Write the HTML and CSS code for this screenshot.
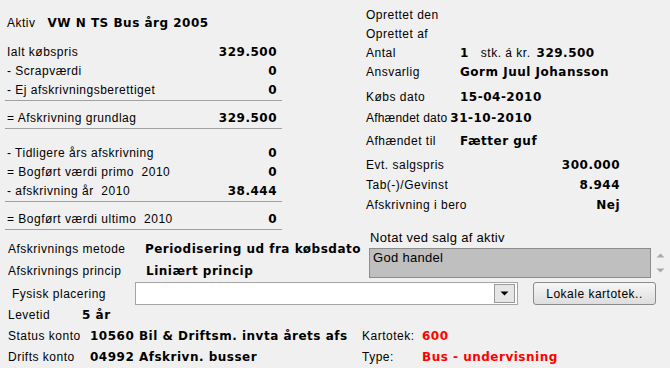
FILE: index.html
```html
<!DOCTYPE html>
<html>
<head>
<meta charset="UTF-8">
<title>Aktiv</title>
<link rel="stylesheet" href="styles.css">
</head>
<body>
<div class="form">
	<div class="top">
		<div class="calc">
			<div class="aktiv"><span class="k">Aktiv</span><b>VW N TS Bus årg 2005</b></div>
			<div class="group">
				<div class="row"><span>Ialt købspris</span><b>329.500</b></div>
				<div class="row"><span>- Scrapværdi</span><b>0</b></div>
				<div class="row"><span>- Ej afskrivningsberettiget</span><b>0</b></div>
			</div>
			<div class="group g2">
				<div class="row"><span>= Afskrivning grundlag</span><b>329.500</b></div>
			</div>
			<div class="group g3">
				<div class="row"><span>- Tidligere års afskrivning</span><b>0</b></div>
				<div class="row"><span>= Bogført værdi primo&nbsp; 2010</span><b>0</b></div>
				<div class="row"><span>- afskrivning år&nbsp; 2010</span><b>38.444</b></div>
			</div>
			<div class="group g4">
				<div class="row"><span>= Bogført værdi ultimo&nbsp; 2010</span><b>0</b></div>
			</div>
		</div>

		<div class="info">
			<div class="ia">
				<div class="ln"><span class="k">Oprettet den</span></div>
				<div class="ln"><span class="k">Oprettet af</span></div>
				<div class="ln"><span class="k">Antal</span><b class="qty">1</b><span class="stk">stk. á kr.</span><b>329.500</b></div>
				<div class="ln"><span class="k">Ansvarlig</span><b>Gorm Juul Johansson</b></div>
			</div>
			<div class="ib">
				<div class="ln"><span class="k">Købs dato</span><b>15-04-2010</b></div>
				<div class="ln"><span class="k auto">Afhændet dato</span><b>31-10-2010</b></div>
			</div>
			<div class="ic">
				<div class="ln"><span class="k">Afhændet til</span><b>Fætter guf</b></div>
			</div>
			<div class="id">
				<div class="ln"><span>Evt. salgspris</span><b>300.000</b></div>
				<div class="ln"><span>Tab(-)/Gevinst</span><b>8.944</b></div>
				<div class="ln"><span>Afskrivning i bero</span><b>Nej</b></div>
			</div>
		</div>
	</div>

	<div class="mid">
		<div class="method">
			<div class="ln"><span class="k">Afskrivnings metode</span><b>Periodisering ud fra købsdato</b></div>
			<div class="ln"><span class="k">Afskrivnings princip</span><b>Liniært princip</b></div>
		</div>
		<div class="note">
			<div class="note-lbl">Notat ved salg af aktiv</div>
			<div class="note-body">
				<div class="note-box">God handel</div>
				<svg class="scroll" width="9" height="30" viewBox="0 0 9 30">
					<polygon points="0.5,9.5 4.5,5.5 8.5,9.5" fill="#a9a9a9"/>
					<polygon points="0.5,20.5 4.5,24.5 8.5,20.5" fill="#a9a9a9"/>
				</svg>
			</div>
		</div>
	</div>

	<div class="place">
		<span class="place-lbl">Fysisk placering</span>
		<div class="combo">
			<span class="combo-btn">
				<svg width="9" height="5" viewBox="0 0 9 5"><polygon points="0.5,0.5 8.5,0.5 4.5,4.5" fill="#000"/></svg>
			</span>
		</div>
		<button class="lokal">Lokale kartotek..</button>
	</div>

	<div class="bottom">
		<div class="accounts">
			<div class="ln"><span class="k short">Levetid</span><b>5 år</b></div>
			<div class="ln"><span class="k">Status konto</span><b>10560 Bil &amp; Driftsm. invta årets afs</b></div>
			<div class="ln"><span class="k">Drifts konto</span><b>04992 Afskrivn. busser</b></div>
		</div>
		<div class="kartotek">
			<div class="ln"><span class="k">Kartotek:</span><b class="red">600</b></div>
			<div class="ln"><span class="k">Type:</span><b class="red">Bus - undervisning</b></div>
		</div>
	</div>
</div>
</body>
</html>
```

FILE: styles.css
```css
* {
	margin: 0;
	padding: 0;
	box-sizing: border-box;
}

body {
	width: 670px;
	height: 368px;
	overflow: hidden;
	background: #f0f0f0;
	color: #000;
	font-family: "Liberation Sans", Arial, sans-serif;
	font-size: 12px;
	letter-spacing: 0.5px;
}

b {
	font-family: "DejaVu Sans", Verdana, sans-serif;
	font-weight: bold;
	font-size: 12px;
	letter-spacing: 0.5px;
	white-space: nowrap;
}

.ln {
	display: flex;
	white-space: nowrap;
}

/* top part */
.top {
	display: flex;
}

.calc {
	width: 277px;
	margin-left: 5px;
	padding-top: 14px;
}

.aktiv {
	height: 19px;
	line-height: 19px;
	margin-bottom: 10px;
	padding-left: 2px;
}

.aktiv .k {
	margin-right: 12px;
}

.group {
	border-bottom: 1px solid #a0a0a0;
}

.g2, .g4 {
	padding-top: 8px;
}

.g3 {
	padding-top: 15px;
}

.row {
	display: flex;
	justify-content: space-between;
	height: 19px;
	line-height: 19px;
	padding: 0 5px 0 2px;
	white-space: nowrap;
}

.info {
	width: 254px;
	margin-left: 84px;
	padding-top: 6px;
}

.info .k {
	width: 91px;
	margin-right: 3px;
}

.info .k.auto {
	width: auto;
	letter-spacing: 0.2px;
}

.ia .ln {
	height: 19px;
	line-height: 19px;
}

.qty {
	margin-right: 12px;
}

.stk {
	margin-right: 6px;
}

.ib {
	margin-top: 5px;
}

.ic {
	margin-top: 2px;
}

.ib .ln, .ic .ln {
	height: 21px;
	line-height: 21px;
}

.id {
	margin-top: 3px;
}

.id .ln {
	justify-content: space-between;
	height: 20px;
	line-height: 20px;
}

/* method + note */
.mid {
	display: flex;
}

.method {
	width: 353px;
	margin-left: 8px;
	padding-top: 8px;
}

.method .ln {
	height: 22px;
	line-height: 22px;
}

.method .k {
	width: 138px;
}

.note {
	margin-left: 8px;
}

.note-lbl {
	height: 16px;
	line-height: 16px;
	font-size: 13px;
	letter-spacing: 0.3px;
	padding-left: 1px;
}

.note-body {
	display: flex;
	margin-top: 2px;
}

.note-box {
	width: 282px;
	height: 30px;
	background: #bfbfbf;
	border: 1px solid #8c8c8c;
	padding: 2px 3px;
	font-size: 13px;
	letter-spacing: 0.3px;
	line-height: 14px;
}

.scroll {
	margin-left: 5px;
}

/* placering */
.place {
	display: flex;
	align-items: center;
	height: 23px;
}

.place-lbl {
	width: 135px;
	padding-left: 12px;
	white-space: nowrap;
}

.combo {
	display: flex;
	justify-content: flex-end;
	width: 383px;
	height: 23px;
	background: #fff;
	border: 1px solid #a5a5a5;
	padding: 1px;
}

.combo-btn {
	display: flex;
	align-items: center;
	justify-content: center;
	width: 21px;
	height: 19px;
	background: #e6e6e6;
	border: 1px solid #9a9a9a;
	margin-right: 1px;
}

.lokal {
	width: 123px;
	height: 23px;
	margin-left: 15px;
	border: 1px solid #8a8a8a;
	border-radius: 3px;
	background: linear-gradient(#f6f6f6, #dddddd);
	font-family: "Liberation Sans", Arial, sans-serif;
	font-size: 12px;
	letter-spacing: 0.5px;
	color: #000;
}

/* bottom */
.bottom {
	display: flex;
}

.bottom .ln {
	height: 21px;
	line-height: 21px;
}

.accounts {
	width: 362px;
	padding-left: 8px;
}

.accounts .k {
	width: 79px;
	margin-right: 3px;
}

.accounts .k.short {
	width: 71px;
}

.kartotek {
	padding-top: 21px;
}

.kartotek .k {
	width: 60px;
}

.red {
	color: #f00;
}
```
